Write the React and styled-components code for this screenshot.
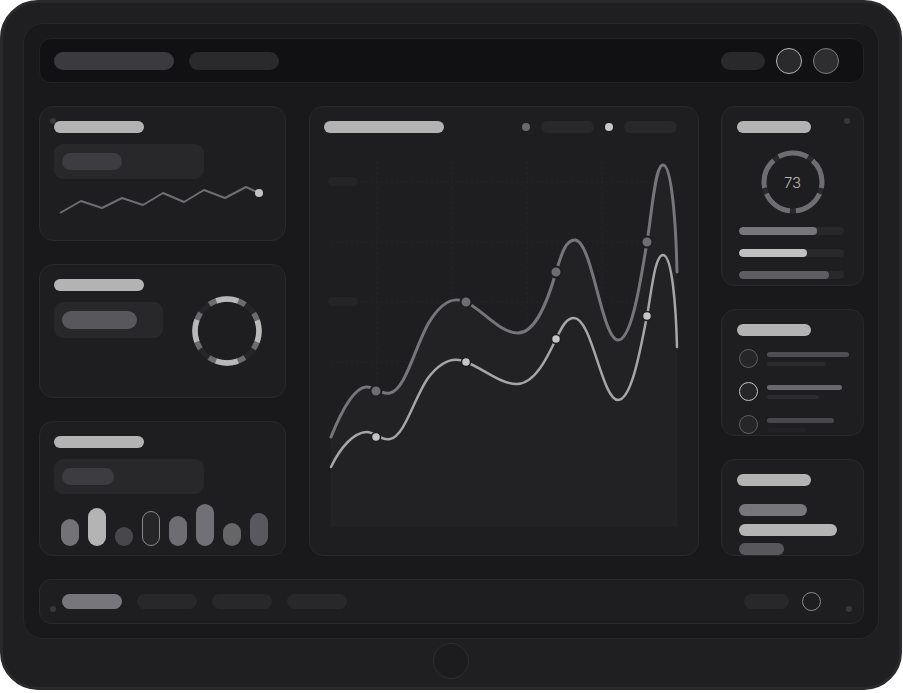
import React from 'react';
import styled, { createGlobalStyle } from 'styled-components';

const GlobalStyle = createGlobalStyle`
  html, body {
    margin: 0;
    padding: 0;
    background: #ffffff;
  }
  body {
    font-family: "Inter", "Liberation Sans", sans-serif;
  }
  * {
    box-sizing: border-box;
  }
`;

const spark = [
  [60, 213], [81, 201], [102, 208], [122, 198], [143, 205],
  [163, 193], [184, 202], [204, 190], [225, 198], [246, 187], [259, 193],
];

const bars = [
  { h: 27, c: '#737377' },
  { h: 38, c: '#b4b4b4' },
  { h: 19, c: '#48484c' },
  { h: 35, c: '#262628', outline: true },
  { h: 30, c: '#6e6e72' },
  { h: 42, c: '#707076' },
  { h: 23, c: '#666669' },
  { h: 33, c: '#58585e' },
];

const progress = [
  { pct: 74, c: '#77777b' },
  { pct: 65, c: '#c0c0c0' },
  { pct: 86, c: '#5e5e62' },
];

const people = [
  { ring: '#5e5e62', line: 82, lineColor: '#4e4e52', sub: 59 },
  { ring: '#c4c4c4', line: 75, lineColor: '#6a6a6e', sub: 52 },
  { ring: '#5e5e62', line: 67, lineColor: '#48484c', sub: 40 },
];

const S1 =
  'M331,437 C341,412 354,388 366,387 C374,386 380,395 390,393 C405,390 414,350 428,324 C441,302 453,296 466,302 C484,311 500,333 518,333 C536,333 548,300 556,272 C562,252 566,240 575,240 C592,240 602,340 618,340 C632,340 641,278 647,242 C652,212 655,165 663,165 C672,165 676,226 677,272';
const S2 =
  'M331,467 C341,446 354,433 366,432 C374,431 380,441 390,439 C405,436 414,398 428,378 C441,361 453,356 466,362 C484,369 500,384 517,384 C535,384 548,356 556,339 C562,327 566,318 574,318 C592,318 602,400 618,400 C632,400 641,346 647,316 C652,288 655,255 663,255 C672,255 676,306 677,347';

const s1Points = [[376, 391], [466, 302], [556, 272], [647, 242]];
const s2Points = [[376, 437], [466, 362], [556, 339], [647, 316]];

const App = () => {
  const leftC = 2 * Math.PI * 32;
  const rightC = 2 * Math.PI * 29;

  return (
    <>
      <GlobalStyle />
      <Device>
        <Screen>
          <TopBar>
            <Pill $w={120} $h={18} $c="#3a3a3f" />
            <Pill $w={90} $h={18} $c="#2a2a2d" />
            <Spacer />
            <Actions>
              <Pill $w={44} $h={18} $c="#29292c" />
              <Avatar $ring="#b4b4b4" $fill="#2a2a2c" />
              <Avatar $ring="#7a7a7e" $fill="#2e2e30" />
            </Actions>
          </TopBar>

          <Main>
            <Column $rows="1fr 1fr 1fr">
              <Card>
                <CornerDot $left={10} $top={11} />
                <Title $w={90} />
                <StatBlock $w={150}>
                  <Pill $w={60} $h={17} $c="#3d3d41" />
                </StatBlock>
                <Sparkline width="212" height="34" viewBox="54 184 212 34">
                  <polyline
                    points={spark.map((p) => p.join(',')).join(' ')}
                    fill="none"
                    stroke="#6e6e72"
                    strokeWidth="2"
                    strokeLinejoin="round"
                  />
                  <circle cx="259" cy="193" r="4" fill="#c2c2c2" />
                </Sparkline>
              </Card>

              <Card $row>
                <Stack>
                  <Title $w={90} />
                  <StatBlock $w={109} $h={36}>
                    <Pill $w={75} $h={18} $c="#58585c" />
                  </StatBlock>
                </Stack>
                <DonutSvg width="76" height="76" viewBox="0 0 76 76">
                  <circle cx="38" cy="38" r="32" fill="none" stroke="#262628" strokeWidth="5.5" />
                  <circle
                    cx="38" cy="38" r="32" fill="none" stroke="#6c6c70" strokeWidth="5.5"
                    strokeDasharray={`${(leftC * 68) / 360} ${(leftC * 22) / 360}`}
                    strokeDashoffset={(leftC * 34) / 360}
                  />
                  <circle
                    cx="38" cy="38" r="32" fill="none" stroke="#b8b8b8" strokeWidth="5.5"
                    strokeDasharray={`${(leftC * 40) / 360} ${(leftC * 50) / 360}`}
                    strokeDashoffset={(leftC * 20) / 360}
                  />
                </DonutSvg>
              </Card>

              <Card>
                <Title $w={90} />
                <StatBlock $w={150}>
                  <Pill $w={52} $h={17} $c="#3d3d41" />
                </StatBlock>
                <Bars>
                  {bars.map((b, i) => (
                    <Bar key={i} $h={b.h} $c={b.c} $outline={b.outline} />
                  ))}
                </Bars>
              </Card>
            </Column>

            <Card>
              <ChartHeader>
                <Title $w={120} />
                <Legend>
                  <LegendDot $c="#6a6a6e" />
                  <Pill $w={53} $h={12} $c="#28282a" />
                  <LegendDot $c="#c8c8c8" />
                  <Pill $w={53} $h={12} $c="#28282a" />
                </Legend>
              </ChartHeader>
              <ChartSvg width="360" height="390" viewBox="324 150 360 390">
                {[182, 242, 302, 362, 422, 482].map((y) => (
                  <line key={y} x1="331" x2="677" y1={y} y2={y} stroke="#242426" strokeDasharray="2 3" />
                ))}
                {[377, 452, 527, 602].map((x) => (
                  <line key={x} x1={x} x2={x} y1="162" y2="527" stroke="#242426" strokeDasharray="2 3" />
                ))}
                <rect x="328" y="177" width="30" height="9" rx="4.5" fill="#242426" />
                <rect x="328" y="297" width="30" height="9" rx="4.5" fill="#242426" />
                <path d={`${S1} L677,527 L331,527 Z`} fill="#222224" />
                <path d={S1} fill="none" stroke="#76767a" strokeWidth="3" strokeLinecap="round" />
                <path d={S2} fill="none" stroke="#a6a6a8" strokeWidth="2.5" strokeLinecap="round" />
                {s1Points.map(([x, y]) => (
                  <circle key={`a${x}`} cx={x} cy={y} r="5.5" fill="#6e6e72" stroke="#1e1e20" strokeWidth="2" />
                ))}
                {s2Points.map(([x, y]) => (
                  <circle key={`b${x}`} cx={x} cy={y} r="4.5" fill="#c4c4c4" stroke="#1e1e20" strokeWidth="1.5" />
                ))}
              </ChartSvg>
            </Card>

            <Column $rows="180px 127px 1fr">
              <SideCard>
                <CornerDot $right={13} $top={11} />
                <Title $w={74} />
                <RingWrap>
                  <svg width="66" height="66" viewBox="0 0 66 66">
                    <circle cx="33" cy="33" r="29" fill="none" stroke="#29292b" strokeWidth="5" />
                    <circle
                      cx="33" cy="33" r="29" fill="none" stroke="#6e6e72" strokeWidth="5"
                      strokeDasharray={`${(rightC * 60) / 360} ${(rightC * 12) / 360}`}
                      strokeDashoffset={(rightC * 48) / 360}
                    />
                  </svg>
                  <RingValue>73</RingValue>
                </RingWrap>
                <ProgressList>
                  {progress.map((p, i) => (
                    <Track key={i}>
                      <Fill $c={p.c} style={{ width: `${p.pct}%` }} />
                    </Track>
                  ))}
                </ProgressList>
              </SideCard>

              <SideCard>
                <Title $w={74} />
                <PeopleList>
                  {people.map((p, i) => (
                    <Person key={i}>
                      <PersonAvatar $ring={p.ring} />
                      <PersonText>
                        <Pill $w={p.line} $h={5} $c={p.lineColor} />
                        <Pill $w={p.sub} $h={4} $c={i === 2 ? '#232325' : '#2c2c2e'} />
                      </PersonText>
                    </Person>
                  ))}
                </PeopleList>
              </SideCard>

              <SideCard>
                <Title $w={74} />
                <TagStack>
                  <Pill $w={68} $h={12} $c="#77777b" />
                  <Pill $w={98} $h={12} $c="#b4b4b4" />
                  <Pill $w={45} $h={12} $c="#58585c" />
                </TagStack>
              </SideCard>
            </Column>
          </Main>

          <BottomBar>
            <BarDot />
            <Tabs>
              <Pill $w={60} $h={15} $c="#77777b" />
              <Pill $w={60} $h={15} $c="#28282a" />
              <Pill $w={60} $h={15} $c="#28282a" />
              <Pill $w={60} $h={15} $c="#28282a" />
            </Tabs>
            <Spacer />
            <Pill $w={45} $h={15} $c="#28282a" />
            <SmallCircle />
            <BarDot />
          </BottomBar>
        </Screen>
        <HomeButton />
      </Device>
    </>
  );
};

const Device = styled.div`
  width: 902px;
  height: 690px;
  border: 3px solid #29292b;
  border-radius: 38px;
  background: #1f1f21;
  padding: 20px 20px 0;
  display: flex;
  flex-direction: column;
  align-items: center;
`;

const Screen = styled.div`
  width: 100%;
  height: 616px;
  border: 1px solid #262628;
  border-radius: 20px;
  background: #19191b;
  padding: 14px 14px 14px 15px;
  display: flex;
  flex-direction: column;
  gap: 23px;
`;

const HomeButton = styled.div`
  margin-top: 4px;
  width: 36px;
  height: 36px;
  border-radius: 50%;
  border: 1.5px solid #2f2f31;
  background: #1c1c1e;
`;

const Pill = styled.div`
  flex-shrink: 0;
  width: ${(p) => p.$w}px;
  height: ${(p) => p.$h}px;
  border-radius: 999px;
  background: ${(p) => p.$c};
`;

const Spacer = styled.div`
  flex: 1;
`;

const TopBar = styled.div`
  flex-shrink: 0;
  height: 45px;
  display: flex;
  align-items: center;
  gap: 15px;
  padding: 0 24px 0 14px;
  background: #111113;
  border: 1px solid #232325;
  border-radius: 12px;
`;

const Actions = styled.div`
  display: flex;
  align-items: center;
  gap: 11px;
`;

const Avatar = styled.div`
  width: 26px;
  height: 26px;
  border-radius: 50%;
  border: 1.5px solid ${(p) => p.$ring};
  background: ${(p) => p.$fill};
`;

const Main = styled.div`
  flex: 1;
  min-height: 0;
  display: grid;
  grid-template-columns: 247px 390px 143px;
  column-gap: 22.5px;
`;

const Column = styled.div`
  min-height: 0;
  display: grid;
  grid-template-rows: ${(p) => p.$rows};
  gap: 23px;
`;

const Card = styled.div`
  position: relative;
  min-height: 0;
  overflow: hidden;
  display: flex;
  flex-direction: ${(p) => (p.$row ? 'row' : 'column')};
  padding: 14px;
  background: #1e1e20;
  border: 1px solid #29292b;
  border-radius: 14px;
`;

const SideCard = styled(Card)`
  padding: 14px 15px;
`;

const CornerDot = styled.span`
  position: absolute;
  top: ${(p) => p.$top}px;
  ${(p) => (p.$left !== undefined ? `left: ${p.$left}px;` : `right: ${p.$right}px;`)}
  width: 6px;
  height: 6px;
  border-radius: 50%;
  background: #38383a;
`;

const Title = styled.div`
  position: relative;
  flex-shrink: 0;
  width: ${(p) => p.$w}px;
  height: 12px;
  border-radius: 6px;
  background: #b3b3b3;
`;

const Stack = styled.div`
  display: flex;
  flex-direction: column;
`;

const StatBlock = styled.div`
  flex-shrink: 0;
  display: flex;
  width: ${(p) => p.$w}px;
  height: ${(p) => p.$h || 35}px;
  margin-top: 11px;
  padding: 9px 8px;
  border-radius: 9px;
  background: #28282a;
`;

const Sparkline = styled.svg`
  display: block;
  margin-top: 5px;
`;

const DonutSvg = styled.svg`
  display: block;
  align-self: center;
  margin-left: auto;
  margin-right: 6px;
`;

const Bars = styled.div`
  display: flex;
  align-items: flex-end;
  gap: 9px;
  height: 42px;
  margin-top: 10px;
  padding-left: 7px;
`;

const Bar = styled.div`
  width: 18px;
  height: ${(p) => p.$h}px;
  border-radius: 9px;
  background: ${(p) => p.$c};
  border: ${(p) => (p.$outline ? '1.5px solid #8a8a8e' : 'none')};
`;

const ChartHeader = styled.div`
  display: flex;
  align-items: center;
  height: 12px;
`;

const Legend = styled.div`
  display: flex;
  align-items: center;
  gap: 11px;
  margin-left: auto;
  margin-right: 7px;
`;

const LegendDot = styled.span`
  width: 8px;
  height: 8px;
  border-radius: 50%;
  background: ${(p) => p.$c};
`;

const ChartSvg = styled.svg`
  display: block;
  margin-top: 17px;
`;

const RingWrap = styled.div`
  position: relative;
  align-self: center;
  width: 66px;
  height: 66px;
  margin-top: 16px;

  svg {
    display: block;
  }
`;

const RingValue = styled.span`
  position: absolute;
  inset: 0;
  display: flex;
  align-items: center;
  justify-content: center;
  font-size: 15px;
  font-weight: 300;
  color: #b8b8b8;
`;

const ProgressList = styled.div`
  display: flex;
  flex-direction: column;
  gap: 14px;
  margin: 12px 0 0 2px;
`;

const Track = styled.div`
  width: 105px;
  height: 8px;
  border-radius: 4px;
  background: #28282a;
  overflow: hidden;
`;

const Fill = styled.div`
  height: 100%;
  border-radius: 4px;
  background: ${(p) => p.$c};
`;

const PeopleList = styled.div`
  display: flex;
  flex-direction: column;
  gap: 14px;
  margin: 13px 0 0 2px;
`;

const Person = styled.div`
  display: flex;
  align-items: center;
  gap: 9px;
`;

const PersonAvatar = styled.div`
  flex-shrink: 0;
  width: 19px;
  height: 19px;
  border-radius: 50%;
  border: 1.5px solid ${(p) => p.$ring};
  background: #262628;
`;

const PersonText = styled.div`
  display: flex;
  flex-direction: column;
  gap: 5px;
`;

const TagStack = styled.div`
  display: flex;
  flex-direction: column;
  gap: 7.5px;
  margin: 18px 0 0 2px;
`;

const BottomBar = styled.div`
  flex-shrink: 0;
  height: 45px;
  display: flex;
  align-items: center;
  padding: 0 11px 0 10px;
  background: #1e1e20;
  border: 1px solid #29292b;
  border-radius: 12px;
`;

const BarDot = styled.span`
  align-self: flex-end;
  margin-bottom: 11px;
  width: 6px;
  height: 6px;
  border-radius: 50%;
  background: #38383a;
`;

const Tabs = styled.div`
  display: flex;
  gap: 15px;
  margin-left: 6px;
`;

const SmallCircle = styled.div`
  width: 19px;
  height: 19px;
  margin: 0 25px 0 13px;
  border-radius: 50%;
  border: 1.5px solid #8a8a8e;
  background: #1e1e20;
`;

export default App;
